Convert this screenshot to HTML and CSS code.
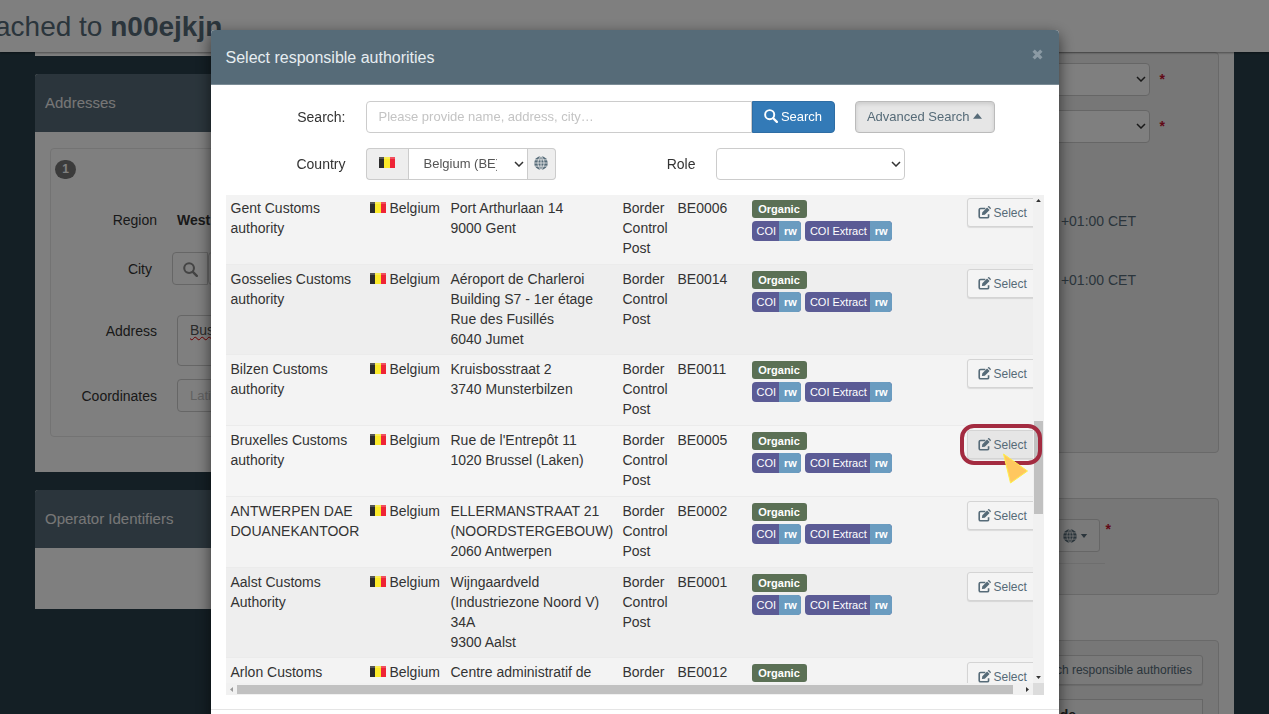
FILE: index.html
```
<!DOCTYPE html>
<html lang="en">
<head>
<meta charset="utf-8">
<title>Select responsible authorities</title>
<link rel="stylesheet" href="styles.css">
</head>
<body>
<svg class="sprite" aria-hidden="true">
  <symbol id="i-search" viewBox="0 0 16 16"><circle cx="6.5" cy="6.5" r="5.200" fill="none" stroke="currentColor" stroke-width="2.2"/><path d="M10.500 10.500l4.200 4.200" stroke="currentColor" stroke-width="2.6" stroke-linecap="round"/></symbol>
  <symbol id="i-chevron" viewBox="0 0 10 6"><path d="M1 1l4 4 4-4" fill="none" stroke="currentColor" stroke-width="1.5"/></symbol>
  <symbol id="i-globe" viewBox="0 0 16 16"><circle cx="8" cy="8" r="7.8" fill="currentColor"/><path d="M8 0v16M0 8h16M1 4.400h14M1 11.600h14M8 0C3.400 4.500 3.400 11.500 8 16M8 0c4.600 4.500 4.600 11.500 0 16" fill="none" stroke="var(--gap, #eee)" stroke-width=".9"/></symbol>
  <symbol id="i-edit" viewBox="0 0 16 16"><path d="M9 3H3.200Q1.500 3 1.500 4.700v8.100q0 1.700 1.700 1.700h8.100q1.700 0 1.700-1.700V10" fill="none" stroke="currentColor" stroke-width="2"/><path d="M4.800 11.200l.5-3.600 5.900-5.900 3.100 3.100-5.900 5.900zM12 .9l.5-.5q.7-.6 1.400 0l1.700 1.700q.6.700 0 1.400l-.5.5z" fill="currentColor"/></symbol>
  <symbol id="i-close" viewBox="0 0 10 10"><path d="M1.500 1.500l7 7M8.500 1.500l-7 7" stroke="currentColor" stroke-width="3"/></symbol>
  <symbol id="i-up" viewBox="0 0 8 5"><path d="M0 5l4-5 4 5z" fill="currentColor"/></symbol>
  <symbol id="i-down" viewBox="0 0 8 5"><path d="M0 0l4 5 4-5z" fill="currentColor"/></symbol>
  <symbol id="i-be" viewBox="0 0 16 11"><path d="M0 0h6v11H0z" fill="#2b2b2b"/><path d="M5 0h6v11H5z" fill="#fbe92a"/><path d="M11 0h5v11h-5z" fill="#ee2436"/><path d="M0 0h16v2H0z" fill="#fff" fill-opacity=".2"/></symbol>
</svg>

<header class="topbar"><h1>ached to <b>n00ejkjn</b></h1></header>
<div class="page">
  <div class="left">
    <section class="panel stub"></section>
    <section class="panel">
      <h2>Addresses</h2>
      <div class="panel-body">
        <div class="address-card">
          <span class="number">1</span>
          <div class="line region"><span class="name">Region</span><b>West</b></div>
          <div class="line city"><label for="city">City</label><button class="find" aria-label="Find city"><svg><use href="#i-search"/></svg></button><input id="city"></div>
          <div class="line address"><label for="addr">Address</label><textarea id="addr" spellcheck="false">Bus</textarea></div>
          <div class="line"><label for="coord">Coordinates</label><input id="coord" placeholder="Latitude"></div>
        </div>
      </div>
    </section>
    <section class="panel">
      <h2>Operator Identifiers</h2>
      <div class="panel-body empty"></div>
    </section>
  </div>
  <div class="right">
    <section class="well first">
      <div class="field"><div class="select"><select aria-label="First field"></select><svg><use href="#i-chevron"/></svg></div><span class="req">*</span></div>
      <div class="field"><div class="select"><select aria-label="Second field"></select><svg><use href="#i-chevron"/></svg></div><span class="req">*</span></div>
      <p class="time">+01:00 CET</p>
      <p class="time">+01:00 CET</p>
    </section>
    <section class="well second">
      <div class="picker"><button class="btn drop" aria-label="Choose country"><svg class="globe"><use href="#i-globe"/></svg><svg class="caret"><use href="#i-down"/></svg></button><span class="req">*</span></div>
      <hr>
    </section>
    <section class="well third">
      <button class="btn small">Search responsible authorities</button>
      <div class="codes"><b>Code</b></div>
    </section>
  </div>
</div>
<div class="backdrop"></div>

<div class="modal" role="dialog" aria-labelledby="title">
  <div class="modal-head"><h3 id="title">Select responsible authorities</h3><button class="close" aria-label="Close"><svg><use href="#i-close"/></svg></button></div>
  <div class="modal-body">
    <div class="form-row">
      <label for="q">Search:</label>
      <div class="group wide"><input id="q" placeholder="Please provide name, address, city…"><button class="primary"><svg><use href="#i-search"/></svg>Search</button></div>
      <button class="advanced">Advanced Search <svg><use href="#i-up"/></svg></button>
    </div>
    <div class="form-row">
      <label for="country">Country</label>
      <div class="group"><span class="addon"><svg class="flag"><use href="#i-be"/></svg></span><div class="select country"><select id="country"><option>Belgium (BE)</option></select><svg><use href="#i-chevron"/></svg></div><button class="world" aria-label="All countries"><svg><use href="#i-globe"/></svg></button></div>
      <label for="role">Role</label>
      <div class="select role"><select id="role"></select><svg><use href="#i-chevron"/></svg></div>
    </div>
    <div class="list">
      <div class="viewport">
        <table>
          <colgroup><col class="c-name"><col class="c-country"><col class="c-address"><col class="c-type"><col class="c-code"><col class="c-scope"><col class="c-action"></colgroup>
          <tbody>
          <tr><td>Gent Customs<br>authority</td><td><svg class="flag"><use href="#i-be"/></svg> Belgium</td><td>Port Arthurlaan 14<br>9000 Gent</td><td>Border<br>Control<br>Post</td><td>BE0006</td><td><span class="organic">Organic</span><div class="tags"><span class="tag">COI<b>rw</b></span><span class="tag">COI Extract<b>rw</b></span></div></td><td><button class="btn small"><svg><use href="#i-edit"/></svg>Select</button></td></tr>
          <tr><td>Gosselies Customs<br>authority</td><td><svg class="flag"><use href="#i-be"/></svg> Belgium</td><td>Aéroport de Charleroi<br>Building S7 - 1er étage<br>Rue des Fusillés<br>6040 Jumet</td><td>Border<br>Control<br>Post</td><td>BE0014</td><td><span class="organic">Organic</span><div class="tags"><span class="tag">COI<b>rw</b></span><span class="tag">COI Extract<b>rw</b></span></div></td><td><button class="btn small"><svg><use href="#i-edit"/></svg>Select</button></td></tr>
          <tr><td>Bilzen Customs<br>authority</td><td><svg class="flag"><use href="#i-be"/></svg> Belgium</td><td>Kruisbosstraat 2<br>3740 Munsterbilzen</td><td>Border<br>Control<br>Post</td><td>BE0011</td><td><span class="organic">Organic</span><div class="tags"><span class="tag">COI<b>rw</b></span><span class="tag">COI Extract<b>rw</b></span></div></td><td><button class="btn small"><svg><use href="#i-edit"/></svg>Select</button></td></tr>
          <tr class="active"><td>Bruxelles Customs<br>authority</td><td><svg class="flag"><use href="#i-be"/></svg> Belgium</td><td>Rue de l'Entrepôt 11<br>1020 Brussel (Laken)</td><td>Border<br>Control<br>Post</td><td>BE0005</td><td><span class="organic">Organic</span><div class="tags"><span class="tag">COI<b>rw</b></span><span class="tag">COI Extract<b>rw</b></span></div></td><td><button class="btn small"><svg><use href="#i-edit"/></svg>Select</button></td></tr>
          <tr><td>ANTWERPEN DAE<br>DOUANEKANTOOR</td><td><svg class="flag"><use href="#i-be"/></svg> Belgium</td><td>ELLERMANSTRAAT 21<br>(NOORDSTERGEBOUW)<br>2060 Antwerpen</td><td>Border<br>Control<br>Post</td><td>BE0002</td><td><span class="organic">Organic</span><div class="tags"><span class="tag">COI<b>rw</b></span><span class="tag">COI Extract<b>rw</b></span></div></td><td><button class="btn small"><svg><use href="#i-edit"/></svg>Select</button></td></tr>
          <tr><td>Aalst Customs<br>Authority</td><td><svg class="flag"><use href="#i-be"/></svg> Belgium</td><td>Wijngaardveld<br>(Industriezone Noord V)<br>34A<br>9300 Aalst</td><td>Border<br>Control<br>Post</td><td>BE0001</td><td><span class="organic">Organic</span><div class="tags"><span class="tag">COI<b>rw</b></span><span class="tag">COI Extract<b>rw</b></span></div></td><td><button class="btn small"><svg><use href="#i-edit"/></svg>Select</button></td></tr>
          <tr><td>Arlon Customs</td><td><svg class="flag"><use href="#i-be"/></svg> Belgium</td><td>Centre administratif de</td><td>Border</td><td>BE0012</td><td><span class="organic">Organic</span></td><td><button class="btn small"><svg><use href="#i-edit"/></svg>Select</button></td></tr>
          </tbody>
        </table>
      </div>
      <div class="vbar"><svg><use href="#i-up"/></svg><i></i><svg><use href="#i-down"/></svg></div>
      <div class="hbar"><svg class="to-left"><use href="#i-up"/></svg><i></i><svg class="to-right"><use href="#i-up"/></svg></div>
      <div class="corner"></div>
    </div>
  </div>
  <div class="modal-foot"></div>
  <span class="ring"></span>
  <svg class="pointer" viewBox="0 0 26 32"><path d="M1 1l24 17-17 12z" fill="#ffc75f" stroke="#fff04a" stroke-width="1"/></svg>
</div>
</body>
</html>
```
FILE: styles.css
```
* { box-sizing: border-box; }
body {
  margin: 0;
  height: 100vh;
  overflow: hidden;
  background: #283e4a;
  color: #333;
  font: 14px/20px "Liberation Sans", Arial, sans-serif;
}
h1, h2, h3, p { margin: 0; font-weight: normal; }
button, input, select, textarea { font: 13px/20px "Liberation Sans", Arial, sans-serif; color: #555; }
.sprite { position: absolute; width: 0; height: 0; }

.topbar {
  position: relative;
  height: 52px;
  background: #fff;
  box-shadow: 0 1px 2px rgba(0, 0, 0, .4);
  overflow: hidden;
}
.topbar h1 { margin-left: -5px; font-size: 28px; line-height: 54px; color: #566b78; white-space: nowrap; }

.page { display: grid; grid-template-columns: 1fr 1fr; margin: 0 35px; }
.panel { margin-bottom: 18px; background: #fff; border-radius: 3px 3px 0 0; }
.stub { height: 4px; border-radius: 0; }
.panel h2 {
  padding: 0 10px;
  border-radius: 3px 3px 0 0;
  background: #566b78;
  color: #eee;
  font-size: 15px;
  line-height: 58px;
}
.panel-body { padding: 16px 15px 35px; }
.empty { height: 61px; padding: 0; }
.address-card { padding: 11px 4px 24px; border: 1px solid #e6e6e6; border-radius: 4px; }
.number {
  display: block;
  width: 21px;
  border-radius: 10px;
  background: #777;
  color: #fff;
  font-size: 12px;
  font-weight: bold;
  line-height: 19px;
  text-align: center;
}
.line { display: flex; align-items: center; margin-bottom: 13px; }
.line:last-child { margin-bottom: 0; }
.line label, .line .name { width: 102px; margin-right: 20px; text-align: right; }
.line.region { margin: 31px 0 22px; }
.line.city { margin-bottom: 30px; }
.line.city label { width: 97px; }
.line input, .line textarea { flex: 1; height: 33px; padding: 5px 12px; border: 1px solid #ccc; border-radius: 4px; }
.line textarea {
  height: 51px;
  resize: none;
  padding-top: 4px;
  font-size: 14px;
  text-decoration: underline wavy #e00000 1px;
}
.line.address label { margin-bottom: 20px; }
.find { width: 36px; height: 33px; padding: 0; border: 1px solid #ccc; border-radius: 4px 0 0 4px; background: #fff; color: #888; }
.find svg { width: 15px; height: 15px; vertical-align: middle; }

.right { padding: 0 15px; background: #fbfbfb; }
.well { margin-bottom: 45px; border: 1px solid #d2d2d2; border-radius: 4px; background: #efefef; }
.first { height: 401px; padding-top: 10px; }
.field { display: flex; gap: 10px; margin: 0 53px 14px 0; }
.field .select { flex: 1; }
.field .req { padding-top: 6px; }
.req { color: #c4122f; font-weight: bold; }
.time { margin: 68px 82px 0 0; color: #566b78; text-align: right; }
.time + .time { margin-top: 39px; }
.second { height: 97px; padding: 20px 107px 0 0; }
.picker { display: flex; justify-content: flex-end; gap: 6px; }
.second hr { margin: 11px 6px 0 0; border: 0; border-top: 1px solid #ddd; }
.third { height: 120px; margin: 0; padding: 14px 15px; text-align: right; }
.codes { margin-top: 14px; padding: 5px 126px; border: 1px solid #ccc; background: #f5f5f5; }

.btn {
  border: 1px solid #ccc;
  border-radius: 3px;
  background: #f4f4f4;
  color: #566b78;
  white-space: nowrap;
}
.btn.small { height: 30px; padding: 0 10px; font-size: 12px; box-shadow: 0 1px 1px rgba(0, 0, 0, .1); }
td .btn.small { height: 29px; border-color: #d4d4d4; }
.drop { --gap: #f4f4f4; display: flex; align-items: center; justify-content: flex-end; gap: 3px; width: 80px; height: 33px; padding: 0 11px; }
.globe { width: 14px; height: 14px; }
.caret { width: 8px; height: 4px; }

.select { position: relative; }
.select select {
  display: block;
  width: 100%;
  height: 33px;
  padding: 0 30px 0 15px;
  border: 1px solid #ccc;
  border-radius: 4px;
  background: #fff;
  appearance: none;
}
.select svg { position: absolute; right: 4px; top: 13px; width: 10px; height: 6px; color: #333; pointer-events: none; }

.backdrop { position: fixed; inset: 0; background: rgba(0, 0, 0, .5); }

.modal {
  position: fixed;
  top: 30px;
  left: 0;
  right: 0;
  width: calc(100% - 60px);
  max-width: 848px;
  margin: 0 auto;
  border-radius: 4px;
  background: #fff;
  box-shadow: 0 5px 15px rgba(0, 0, 0, .6);
}
.modal-head {
  display: flex;
  align-items: center;
  justify-content: space-between;
  height: 55px;
  padding: 0 16px 0 15px;
  border-bottom: 1px solid #7b8c96;
  border-radius: 4px 4px 0 0;
  background: #566b78;
}
.modal-head h3 { padding-top: 2px; color: #e6edf1; font-size: 16px; }
.close { display: flex; margin-bottom: 6px; padding: 0; border: 0; background: none; color: #8b9aa4; }
.close svg { width: 11px; height: 11px; }
.modal-body { padding: 16px 15px 14px; }
.modal-foot { height: 60px; border-top: 1px solid #e5e5e5; }

.form-row { display: flex; align-items: center; gap: 20px; height: 32px; margin-bottom: 15px; }
.form-row label { width: 120px; text-align: right; }
.form-row select { height: 32px; }
.group { display: flex; width: 190px; height: 32px; }
.group.wide { width: 469px; }
.group input { flex: 1; min-width: 0; padding: 0 12px; border: 1px solid #ccc; border-radius: 4px 0 0 4px; }
input::placeholder { color: #c4c4c4; }
.primary {
  width: 83px;
  padding: 0;
  border: 1px solid #2e6da4;
  border-radius: 0 4px 4px 0;
  background: #337ab7;
  color: #fff;
}
.primary svg { width: 14px; height: 14px; margin-right: 3px; vertical-align: -2px; }
.advanced {
  width: 140px;
  height: 32px;
  padding: 0;
  border: 1px solid #bbb;
  border-radius: 4px;
  background: #e6e6e6;
  box-shadow: inset 0 2px 4px rgba(0, 0, 0, .12);
  color: #566b78;
}
.advanced svg { width: 9px; height: 6px; vertical-align: 2px; }
.addon { width: 42px; padding: 4px 12px; border: 1px solid #ccc; border-right: 0; border-radius: 4px 0 0 4px; background: #eee; }
.flag { width: 16px; height: 11px; }
.country { flex: 1; }
.country select { border-radius: 0; }
.world { width: 28px; padding: 0 0 3px; border: 1px solid #ccc; border-left: 0; border-radius: 0 4px 4px 0; background: #eee; color: #566b78; }
.world svg { width: 14px; height: 14px; vertical-align: middle; }
.role { width: 189px; }

.list { display: grid; grid-template-columns: 1fr 11px; grid-template-rows: 488px 12px; }
.viewport { overflow: hidden; background: #f3f3f3; }
table { width: 816px; margin-top: -2px; border-collapse: collapse; table-layout: fixed; white-space: nowrap; }
.c-name { width: 139px; }
.c-country { width: 81px; }
.c-address { width: 172px; }
.c-type { width: 55px; }
.c-code { width: 74px; }
.c-scope { width: 215px; }
.c-action { width: 80px; }
td { height: 71px; padding: 5px; vertical-align: top; }
tr { background: #f3f3f3; box-shadow: inset 0 1px #ebebeb; }
tr:nth-child(even) { background: #eee; }
tr.active { background: #f5f5f5; }
tr.active .btn { background: #e6e6e6; }
td .btn svg { width: 13px; height: 13px; margin-right: 3px; vertical-align: -2px; }
.organic {
  display: block;
  width: 55px;
  margin-top: 2px;
  border-radius: 3px;
  background: #5b7055;
  color: #fff;
  font-size: 11px;
  font-weight: bold;
  line-height: 18px;
  text-align: center;
}
.tags { display: flex; gap: 4px; margin-top: 3px; }
.tag { padding-left: 5px; border-radius: 4px; background: #5b5b95; color: #fff; font-size: 11px; overflow: hidden; }
.tag b { display: inline-block; margin-left: 3px; padding: 0 4px 0 5px; background: #6a9cc0; }

.vbar { display: flex; flex-direction: column; align-items: center; background: #f1f1f1; padding: 4px 1px; }
.vbar svg { width: 5px; height: 3px; }
.vbar i { width: 9px; height: 93px; margin: 219px 0 auto; background: #c1c1c1; }
.hbar { display: flex; align-items: center; padding: 1px 3px; background: #f1f1f1; }
.hbar svg { width: 5px; height: 3px; }
.hbar i { flex: 1; height: 9px; margin: 0 12px 0 3px; background: #c1c1c1; }
.to-left { color: #999; transform: rotate(-90deg); }
.to-right { transform: rotate(90deg); }
.corner { background: #dcdcdc; }

.ring { position: absolute; right: 17px; top: 394px; width: 82px; height: 41px; border: 4px solid #a32b40; border-radius: 14px; }
.pointer { position: absolute; right: 30px; top: 423px; width: 27px; height: 32px; }
```
